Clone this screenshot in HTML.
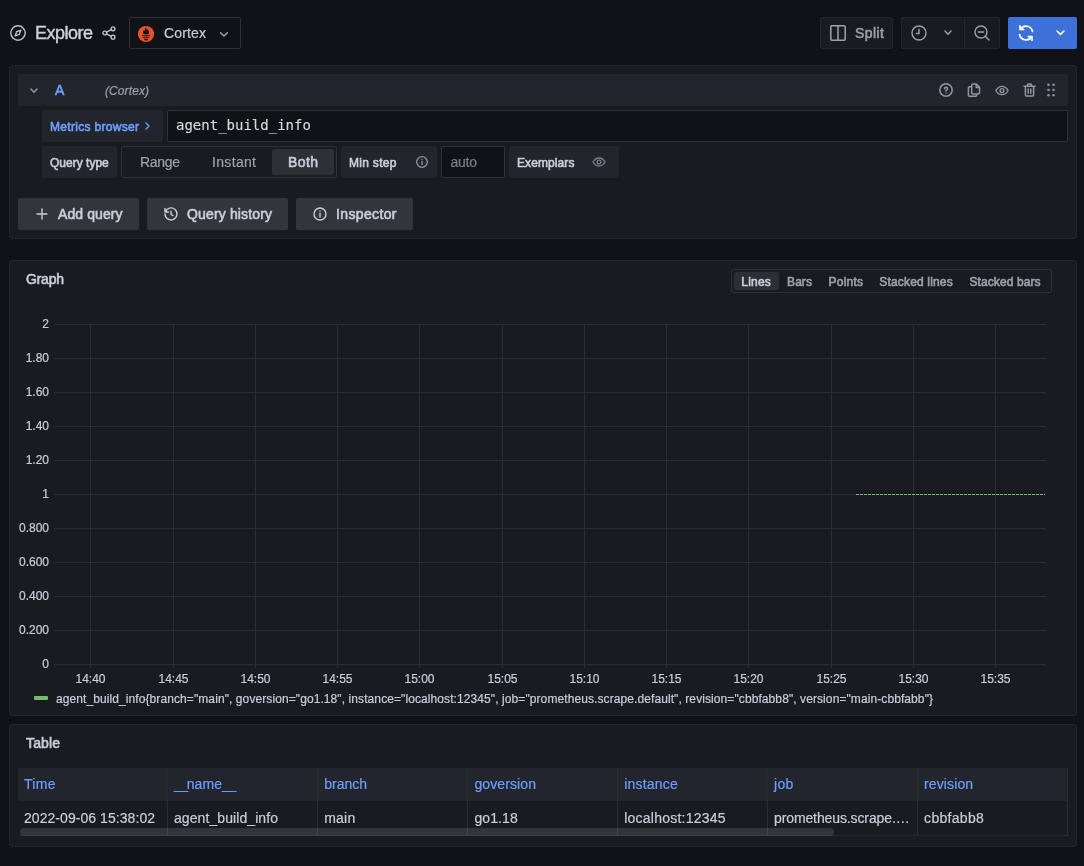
<!DOCTYPE html>
<html lang="en"><head><meta charset="utf-8"><title>Explore - Grafana</title>
<style>
*{box-sizing:border-box;margin:0;padding:0}
html,body{width:1084px;height:866px;overflow:hidden;background:#111217;color:#ccccdc;font-family:"Liberation Sans",Arial,sans-serif;font-size:14px}
.abs{position:absolute}
.t{position:absolute;white-space:nowrap;line-height:1;-webkit-text-stroke:0.2px currentColor}
.m{-webkit-text-stroke:0.6px currentColor}
.panel{position:absolute;background:#181b1f;border:1px solid #24262b;border-radius:3px}
.btn{position:absolute;border-radius:2px}
.sec{color:#9fa0ad}
.blue{color:#6e9fff}
.lbl{position:absolute;background:#22252b;border-radius:2px}
svg{position:absolute;overflow:visible}
.ic{fill:none;stroke:#a0a1af;stroke-width:1.400;stroke-linecap:round;stroke-linejoin:round}
.hi{stroke:#9495a3;stroke-width:1.500}
</style></head><body><div id="root" style="position:absolute;left:0;top:0;width:1084px;height:866px;will-change:transform">

<!-- ===== top toolbar ===== -->
<svg class="ic" style="stroke:#c0c0cf;left:10px;top:25px" width="16" height="16" viewBox="0 0 16 16"><circle cx="8" cy="8" r="7.2"/><path d="M10.9 5.1 9.3 9.3 5.1 10.9 6.7 6.7Z"/></svg>
<div id="explore" class="t" style="-webkit-text-stroke:0.4px currentColor;left:35px;top:24px;font-size:18px;color:#d0d0de;letter-spacing:-0.505px">Explore</div>
<svg class="ic" style="stroke:#c0c0cf;left:102px;top:26px" width="14" height="14" viewBox="0 0 14 14"><circle cx="11" cy="2.8" r="1.9"/><circle cx="2.8" cy="7" r="1.9"/><circle cx="11" cy="11.2" r="1.9"/><path d="M4.5 6.1 9.3 3.7M4.5 7.9 9.3 10.3"/></svg>

<div class="btn" style="left:129px;top:17px;width:112px;height:32px;border:1px solid #2e3036;background:#111217"></div>
<svg style="left:138px;top:26px" width="16" height="16" viewBox="0 0 16 16"><circle cx="8" cy="8" r="8.1" fill="#e6522c"/><path fill="#14110f" d="M8 1.200C8.500 2.500 8.900 3.400 8.800 4.600 9.200 4.200 9.400 3.600 9.500 2.900 10.300 3.900 11 5.100 11 6.400 11 7.200 10.700 7.800 10.300 8.300H5.700C5.300 7.800 5 7.200 5 6.400 5 5.400 5.400 4.700 5.900 4 6 4.600 6.200 5 6.500 5.300 6.400 4.200 7.300 2.900 8 1.200ZM3.900 8.900H12.100V9.800H3.900ZM4.600 10.800H11.400V11.700H4.600ZM6 12.700H10C10 13.700 9.100 14.500 8 14.500S6 13.700 6 12.700Z"/></svg>
<div id="cortex" class="t" style="left:164px;top:26px;font-size:14px;color:#ccccdc;letter-spacing:0.153px">Cortex</div>
<svg class="ic" style="left:220px;top:31.500px" width="8" height="5" viewBox="0 0 8 5"><path d="M.6.700 4 4.100 7.400.700"/></svg>

<div class="btn" style="left:820px;top:17px;width:73px;height:32px;border:1px solid #24262c;background:#181b1f"></div>
<svg class="ic" style="left:830px;top:25px;stroke-width:1.5" width="16" height="16" viewBox="0 0 16 16"><rect x=".8" y=".8" width="14.400" height="14.400" rx="1"/><path d="M8 .8V15.200"/></svg>
<div id="split" class="t m" style="left:855px;top:26px;font-size:14px;color:#9c9daa;letter-spacing:0.441px">Split</div>

<div class="btn" style="left:901px;top:17px;width:99px;height:32px;border:1px solid #24262c;background:#181b1f"></div>
<div class="abs" style="left:964px;top:18px;width:1px;height:30px;background:#25272d"></div>
<svg class="ic" style="left:911px;top:25px" width="16" height="16" viewBox="0 0 16 16"><circle cx="8" cy="8" r="7"/><path d="M8 4.300V8.500H5.400"/></svg>
<svg class="ic" style="left:944px;top:30px" width="8" height="6" viewBox="0 0 8 6"><path d="M1 1 4 4.200 7 1"/></svg>
<svg class="ic" style="left:974px;top:25px" width="16" height="16" viewBox="0 0 16 16"><circle cx="7" cy="7" r="6"/><path d="M4.300 7H9.700M11.400 11.400 15 15"/></svg>

<div class="btn" style="left:1008px;top:17px;width:69px;height:32px;background:#3d71d9"></div>
<svg style="left:1017px;top:24px;fill:none;stroke:#fff;stroke-width:1.7;stroke-linecap:round;stroke-linejoin:round" width="18" height="18" viewBox="0 0 18 18"><path d="M15.500 7.500A6.700 6.700 0 0 0 3.300 5.200M3 1.800V5.400H6.600M2.500 10.500A6.700 6.700 0 0 0 14.700 12.800M15 16.200V12.600H11.400"/></svg>
<svg style="left:1056px;top:30px;fill:none;stroke:#fff;stroke-width:1.5;stroke-linecap:round;stroke-linejoin:round" width="9" height="6" viewBox="0 0 9 6"><path d="M1 1 4.500 4.400 8 1"/></svg>

<!-- ===== query panel ===== -->
<div class="panel" style="left:9px;top:65px;width:1068px;height:174px"></div>
<div class="abs" style="left:18px;top:74px;width:1050px;height:32px;background:#22252b;border-radius:2px"></div>
<svg class="ic hi" style="left:30px;top:87.500px" width="8" height="6" viewBox="0 0 8 6"><path d="M1 1 4 4.200 7 1"/></svg>
<div id="qa" class="t m blue" style="left:55px;top:83px;font-size:14px;letter-spacing:-0.044px">A</div>
<div id="qds" class="t sec" style="left:105px;top:85px;font-size:12px;font-style:italic;letter-spacing:0.094px">(Cortex)</div>

<svg class="ic hi" style="left:939px;top:83px" width="14" height="14" viewBox="0 0 14 14"><circle cx="7" cy="7" r="6.200"/><path d="M5.500 5.700A1.500 1.500 0 1 1 7 7.200V8M7 10V10.100"/></svg>
<svg class="ic hi" style="left:966.500px;top:83px" width="14" height="14" viewBox="0 0 14 14"><path d="M5.800 1.100H9.300L12.500 4.300V9.800A1.100 1.100 0 0 1 11.400 10.900H5.800A1.100 1.100 0 0 1 4.700 9.800V2.200A1.100 1.100 0 0 1 5.800 1.100ZM9.200 1.300V4.400H12.300M4.500 3.800H2.600A1.200 1.200 0 0 0 1.400 5V12A1.200 1.200 0 0 0 2.600 13.200H8.400A1.200 1.200 0 0 0 9.600 12V11.100"/></svg>
<svg class="ic hi" style="left:995px;top:84.500px" width="14" height="11" viewBox="0 0 16 12"><path d="M1 6C2.800 2.700 5.200 1.200 8 1.200S13.200 2.700 15 6C13.200 9.300 10.800 10.800 8 10.800S2.800 9.300 1 6Z"/><circle cx="8" cy="6" r="2.200"/></svg>
<svg class="ic hi" style="left:1023px;top:83px" width="13" height="14" viewBox="0 0 13 14"><path d="M1 3.300H12M4.500 3.300V1.800A.8.800 0 0 1 5.300 1H7.700A.8.800 0 0 1 8.500 1.800V3.300M2.400 3.300V12A1 1 0 0 0 3.400 13H9.600A1 1 0 0 0 10.600 12V3.300M5.200 6V10.300M7.800 6V10.300"/></svg>
<svg style="left:1047px;top:83px;fill:#8f909e" width="8" height="14" viewBox="0 0 8 14"><circle cx="1.500" cy="1.700" r="1.300"/><circle cx="6.500" cy="1.700" r="1.300"/><circle cx="1.500" cy="7" r="1.300"/><circle cx="6.500" cy="7" r="1.300"/><circle cx="1.500" cy="12.300" r="1.300"/><circle cx="6.500" cy="12.300" r="1.300"/></svg>

<div class="lbl" style="left:42px;top:110px;width:121px;height:32px"></div>
<div id="mb" class="t m blue" style="left:50px;top:121px;font-size:12px;letter-spacing:0.308px">Metrics browser</div>
<svg style="left:145px;top:122px;fill:none;stroke:#6e9fff;stroke-width:1.400;stroke-linecap:round;stroke-linejoin:round" width="5" height="8" viewBox="0 0 5 8"><path d="M1 1 4 4 1 7"/></svg>
<div class="abs" style="left:167px;top:110px;width:901px;height:32px;background:#111217;border:1px solid #2f3137;border-radius:2px"></div>
<div id="q" class="t" style="left:176px;top:118px;font-size:14px;font-family:'DejaVu Sans Mono','Liberation Mono',monospace;color:#d8d8dc;-webkit-text-stroke:0.15px currentColor">agent_build_info</div>

<div class="lbl" style="left:42px;top:146px;width:75px;height:32px"></div>
<div id="qt" class="t m" style="left:50px;top:157px;font-size:12px;letter-spacing:0.005px">Query type</div>
<div class="abs" style="left:121px;top:146px;width:216px;height:32px;background:#181b1f;border:1px solid #2d3035;border-radius:2px"></div>
<div class="abs" style="left:272px;top:149px;width:62px;height:26px;background:#2e3036;border-radius:2px"></div>
<div id="r1" class="t sec" style="left:140px;top:155px;font-size:14px;letter-spacing:-0.316px">Range</div>
<div id="r2" class="t sec" style="left:212px;top:155px;font-size:14px;letter-spacing:0.328px">Instant</div>
<div id="r3" class="t m" style="left:288px;top:155px;font-size:14px;letter-spacing:0.396px">Both</div>

<div class="lbl" style="left:341px;top:146px;width:96px;height:32px"></div>
<div id="ms" class="t m" style="left:349px;top:157px;font-size:12px;letter-spacing:0.292px">Min step</div>
<svg class="ic" style="left:416px;top:156px;stroke-width:1.300;stroke:#9495a3" width="12" height="12" viewBox="0 0 12 12"><circle cx="6" cy="6" r="5.300"/><path d="M6 5.500V8.500M6 3.500V3.600"/></svg>
<div class="abs" style="left:441px;top:146px;width:64px;height:32px;background:#111217;border:1px solid #2f3137;border-radius:2px"></div>
<div id="auto" class="t" style="left:450.4px;top:155px;font-size:14px;color:#7b7d88;letter-spacing:-0.217px">auto</div>
<div class="lbl" style="left:509px;top:146px;width:110px;height:32px"></div>
<div id="ex" class="t m" style="left:517px;top:157px;font-size:12px;letter-spacing:0.089px">Exemplars</div>
<svg class="ic" style="left:592px;top:157px;stroke:#7c7d8a;stroke-width:1.300" width="14" height="10" viewBox="0 0 14 10"><path d="M1 5C2.600 2.200 4.600 1 7 1S11.400 2.200 13 5C11.400 7.800 9.400 9 7 9S2.600 7.800 1 5Z"/><circle cx="7" cy="5" r="1.900"/></svg>

<div class="btn" style="left:18px;top:198px;width:121px;height:32px;background:#33353b"></div>
<svg class="ic" style="left:37px;top:209px;stroke:#ccccdc;stroke-width:1.400" width="10" height="10" viewBox="0 0 10 10"><path d="M5 0V10M0 5H10"/></svg>
<div id="b1" class="t m" style="left:58px;top:207px;font-size:14px;letter-spacing:0.084px">Add query</div>
<div class="btn" style="left:147px;top:198px;width:141px;height:32px;background:#33353b"></div>
<svg class="ic" style="left:164px;top:207px;stroke:#ccccdc" width="14" height="14" viewBox="0 0 14 14"><path d="M1.300 5A6 6 0 1 1 1 7M1 1.500V5H4.500M7 4.200V7.200L9 8.600"/></svg>
<div id="b2" class="t m" style="left:187px;top:207px;font-size:14px;letter-spacing:0.146px">Query history</div>
<div class="btn" style="left:296px;top:198px;width:117px;height:32px;background:#33353b"></div>
<svg class="ic" style="left:313px;top:207px;stroke:#ccccdc" width="14" height="14" viewBox="0 0 14 14"><circle cx="7" cy="7" r="6"/><path d="M7 6.500V10M7 4.200V4.300"/></svg>
<div id="b3" class="t m" style="left:336px;top:207px;font-size:14px;letter-spacing:0.363px">Inspector</div>

<!-- ===== graph panel ===== -->
<div class="panel" style="left:9px;top:260px;width:1068px;height:456px"></div>
<div id="gt" class="t m" style="left:26px;top:272px;font-size:14px;letter-spacing:-0.23px">Graph</div>
<!--GRAPH-->
<svg id="gsvg" style="left:0;top:300px" width="1084" height="420" viewBox="0 300 1084 420" font-family="Liberation Sans, Arial, sans-serif" font-size="12" fill="#ccccdc" stroke="#ccccdc" stroke-width="0.2">
<path d="M54 324.5H1046M54 358.5H1046M54 392.5H1046M54 426.5H1046M54 460.5H1046M54 494.5H1046M54 528.5H1046M54 562.5H1046M54 596.5H1046M54 630.5H1046M54 664.5H1046M90.5 324V668M173.5 324V668M255.5 324V668M337.5 324V668M419.5 324V668M502.5 324V668M584.5 324V668M666.5 324V668M748.5 324V668M831.5 324V668M913.5 324V668M995.5 324V668" stroke="#2a2d32" stroke-width="1" fill="none" shape-rendering="crispEdges"/>
<text class="yl" x="49" y="327.5" text-anchor="end">2</text>
<text class="yl" x="49" y="361.5" text-anchor="end">1.80</text>
<text class="yl" x="49" y="395.5" text-anchor="end">1.60</text>
<text class="yl" x="49" y="429.5" text-anchor="end">1.40</text>
<text class="yl" x="49" y="463.5" text-anchor="end">1.20</text>
<text class="yl" x="49" y="497.5" text-anchor="end">1</text>
<text class="yl" x="49" y="531.5" text-anchor="end">0.800</text>
<text class="yl" x="49" y="565.5" text-anchor="end">0.600</text>
<text class="yl" x="49" y="599.5" text-anchor="end">0.400</text>
<text class="yl" x="49" y="633.5" text-anchor="end">0.200</text>
<text class="yl" x="49" y="667.5" text-anchor="end">0</text>
<text class="xl" x="90.5" y="683" text-anchor="middle">14:40</text>
<text class="xl" x="173.5" y="683" text-anchor="middle">14:45</text>
<text class="xl" x="255.5" y="683" text-anchor="middle">14:50</text>
<text class="xl" x="337.5" y="683" text-anchor="middle">14:55</text>
<text class="xl" x="419.5" y="683" text-anchor="middle">15:00</text>
<text class="xl" x="502.5" y="683" text-anchor="middle">15:05</text>
<text class="xl" x="584.5" y="683" text-anchor="middle">15:10</text>
<text class="xl" x="666.5" y="683" text-anchor="middle">15:15</text>
<text class="xl" x="748.5" y="683" text-anchor="middle">15:20</text>
<text class="xl" x="831.5" y="683" text-anchor="middle">15:25</text>
<text class="xl" x="913.5" y="683" text-anchor="middle">15:30</text>
<text class="xl" x="995.5" y="683" text-anchor="middle">15:35</text>
<path d="M856 494.5H1045" stroke="#73bf69" stroke-width="1" stroke-dasharray="3.2 0.8" fill="none"/>
<rect x="34" y="696" width="14" height="4" rx="1" fill="#73bf69" stroke="none"/>
<text id="leg" x="56" y="703" letter-spacing="0.0896">agent_build_info{branch="main", goversion="go1.18", instance="localhost:12345", job="prometheus.scrape.default", revision="cbbfabb8", version="main-cbbfabb"}</text>
</svg>
<div class="abs" style="left:731px;top:269px;width:321px;height:24px;border:1px solid #2f3137;border-radius:2px;background:#181b1f"></div>
<div class="abs" style="left:734px;top:272px;width:45px;height:18px;background:#2d2f35;border-radius:2px"></div>
<div id="s1" class="t m" style="left:741.3px;top:276px;font-size:12px;letter-spacing:0.203px">Lines</div>
<div id="s2" class="t m sec" style="left:787.1px;top:276px;font-size:12px;letter-spacing:0.037px">Bars</div>
<div id="s3" class="t m sec" style="left:828.5px;top:276px;font-size:12px;letter-spacing:0.228px">Points</div>
<div id="s4" class="t m sec" style="left:879.3px;top:276px;font-size:12px;letter-spacing:0.169px">Stacked lines</div>
<div id="s5" class="t m sec" style="left:969.4px;top:276px;font-size:12px;letter-spacing:0.105px">Stacked bars</div>
<!--/GRAPH-->

<!-- ===== table panel ===== -->
<div class="panel" style="left:9px;top:724px;width:1068px;height:123px"></div>
<div id="tt" class="t m" style="left:26px;top:736px;font-size:14px;letter-spacing:0.133px">Table</div>
<!--TABLE-->
<div class="abs" style="left:18px;top:768px;width:1050px;height:33px;background:#22252b"></div>
<div class="abs" style="left:18px;top:835px;width:1050px;height:1px;background:#26282d"></div>
<div class="abs" style="left:167px;top:768px;width:1px;height:68px;background:#2b2d33"></div>
<div class="abs" style="left:317px;top:768px;width:1px;height:68px;background:#2b2d33"></div>
<div class="abs" style="left:467px;top:768px;width:1px;height:68px;background:#2b2d33"></div>
<div class="abs" style="left:617px;top:768px;width:1px;height:68px;background:#2b2d33"></div>
<div class="abs" style="left:767px;top:768px;width:1px;height:68px;background:#2b2d33"></div>
<div class="abs" style="left:917px;top:768px;width:1px;height:68px;background:#2b2d33"></div>
<div class="abs" style="left:1067px;top:768px;width:1px;height:68px;background:#2b2d33"></div>
<div id="h0" class="t blue" style="left:24px;top:777px;font-size:14px;letter-spacing:0.302px">Time</div>
<div id="v0" class="t" style="left:24px;top:811px;font-size:14px;letter-spacing:0.056px">2022-09-06 15:38:02</div>
<div id="h1" class="t blue" style="left:174px;top:777px;font-size:14px;letter-spacing:0.076px"><span style="letter-spacing: -1.43px">__</span>name<span style="letter-spacing: -1.43px">__</span></div>
<div id="v1" class="t" style="left:174px;top:811px;font-size:14px;letter-spacing:0.082px">agent_build_info</div>
<div id="h2" class="t blue" style="left:324.2px;top:777px;font-size:14px;letter-spacing:-0.002px">branch</div>
<div id="v2" class="t" style="left:324.2px;top:811px;font-size:14px;letter-spacing:0.214px">main</div>
<div id="h3" class="t blue" style="left:474.4px;top:777px;font-size:14px;letter-spacing:0.112px">goversion</div>
<div id="v3" class="t" style="left:474.4px;top:811px;font-size:14px;letter-spacing:0.094px">go1.18</div>
<div id="h4" class="t blue" style="left:624.2px;top:777px;font-size:14px;letter-spacing:0.192px">instance</div>
<div id="v4" class="t" style="left:624.2px;top:811px;font-size:14px;letter-spacing:0.237px">localhost:12345</div>
<div id="h5" class="t blue" style="left:774px;top:777px;font-size:14px;letter-spacing:0.356px">job</div>
<div id="v5" class="t" style="left:774px;top:811px;font-size:14px;letter-spacing:-0.113px">prometheus.scrape.…</div>
<div id="h6" class="t blue" style="left:924.1px;top:777px;font-size:14px;letter-spacing:0.107px">revision</div>
<div id="v6" class="t" style="left:924.1px;top:811px;font-size:14px;letter-spacing:0.299px">cbbfabb8</div>
<div class="abs" style="left:20px;top:828px;width:814px;height:7.500px;background:rgba(204,204,220,0.15);border-radius:4px"></div>
<!--/TABLE-->
</div></body></html>
